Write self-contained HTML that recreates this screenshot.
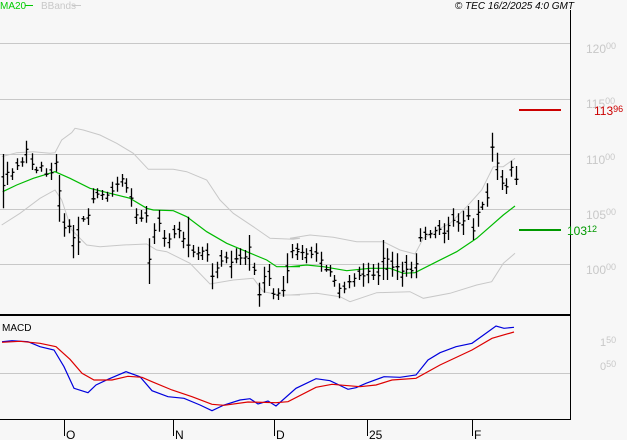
<!DOCTYPE html>
<html><head><meta charset="utf-8"><style>
html,body{margin:0;padding:0;background:#f7f7f7;width:627px;height:440px;overflow:hidden}
svg{display:block;font-family:"Liberation Sans",sans-serif}
</style></head><body>
<svg id="s" width="627" height="440" xmlns="http://www.w3.org/2000/svg">
<rect width="627" height="440" fill="#f7f7f7"/>
<g stroke="#c8c8c8" stroke-width="1">
<line x1="0" y1="43.5" x2="570" y2="43.5"/>
<line x1="0" y1="99.5" x2="570" y2="99.5"/>
<line x1="0" y1="154.5" x2="570" y2="154.5"/>
<line x1="0" y1="209.5" x2="570" y2="209.5"/>
<line x1="0" y1="264.5" x2="570" y2="264.5"/>
<line x1="0" y1="373.5" x2="570" y2="373.5"/>
</g>
<g fill="#c8c8c8" font-size="12">
<text x="586" y="53">120<tspan font-size="9" dy="-4">00</tspan></text>
<text x="586" y="108">115<tspan font-size="9" dy="-4">00</tspan></text>
<text x="586" y="164">110<tspan font-size="9" dy="-4">00</tspan></text>
<text x="586" y="219">105<tspan font-size="9" dy="-4">00</tspan></text>
<text x="586" y="274">100<tspan font-size="9" dy="-4">00</tspan></text>
<text x="600" y="346" font-size="11">1<tspan font-size="9" dy="-3">50</tspan></text>
<text x="600" y="370" font-size="11">0<tspan font-size="9" dy="-3">50</tspan></text>
</g>
<g id="bands" fill="none"></g>
<g id="bars" stroke="#000" stroke-width="1.3"></g>
<line x1="570.5" y1="10" x2="570.5" y2="420" stroke="#000"/>
<line x1="0" y1="315" x2="570" y2="315" stroke="#000" stroke-width="2"/>
<line x1="0" y1="419.5" x2="570" y2="419.5" stroke="#000"/>
<g stroke="#000">
<line x1="64.5" y1="420" x2="64.5" y2="436"/><line x1="173.5" y1="420" x2="173.5" y2="436"/>
<line x1="274.5" y1="420" x2="274.5" y2="436"/><line x1="367.5" y1="420" x2="367.5" y2="436"/>
<line x1="472.5" y1="420" x2="472.5" y2="436"/>
</g>
<g font-size="12" fill="#000">
<text x="66" y="439">O</text><text x="175" y="439">N</text><text x="276" y="439">D</text>
<text x="369" y="439">25</text><text x="474" y="439">F</text>
<text x="2" y="331" font-size="10">MACD</text>
</g>
<line x1="519" y1="110" x2="561" y2="110" stroke="#cc0000" stroke-width="2"/>
<text x="594" y="115" font-size="12" fill="#cc0000">113<tspan font-size="9" dy="-3">96</tspan></text>
<line x1="519" y1="230" x2="561" y2="230" stroke="#009900" stroke-width="2"/>
<text x="567" y="235" font-size="12" fill="#009900">103<tspan font-size="9" dy="-3">12</tspan></text>
<text x="0" y="9" font-size="10" fill="#00cc00">MA20</text>
<line x1="25" y1="5.5" x2="33" y2="5.5" stroke="#00cc00"/>
<text x="41" y="9" font-size="10" fill="#c8c8c8">BBands</text>
<line x1="72" y1="5.5" x2="81" y2="5.5" stroke="#c8c8c8"/>
<text x="574" y="9" font-size="10" font-style="italic" text-anchor="end" fill="#000">© TEC 16/2/2025 4:0 GMT</text>
</svg>
<script>
var NS="http://www.w3.org/2000/svg";
function P(pts,ox,oy,sx,sy){return pts.map(function(p){return (ox+p[0]/sx).toFixed(1)+","+(oy+p[1]/sy).toFixed(1)}).join(" ");}
function pl(g,pts,c,w){var e=document.createElementNS(NS,"polyline");e.setAttribute("points",pts);e.setAttribute("stroke",c);e.setAttribute("stroke-width",w);e.setAttribute("fill","none");document.getElementById(g).appendChild(e);}
var up3=[[5,110],[50,98],[100,95],[150,100],[165,98],[185,60],[215,38],[225,25],[250,30],[300,45],[350,70],[400,100],[445,148],[520,148],[560,155],[620,180],[660,240],[700,280],[760,320],[810,355],[880,358],[900,355]];
var up4=[[0,355],[60,345],[130,352],[200,365],[280,365],[330,390],[375,402],[400,355],[440,330],[480,310],[530,260],[575,210],[610,140],[640,140],[675,115]];
var lo3=[[5,315],[60,280],[120,235],[165,210],[185,240],[215,330],[260,375],[300,380],[370,375],[440,372],[470,390],[500,395],[570,430],[630,492],[700,480],[760,475],[790,515],[840,525],[900,525]];
var lo4=[[0,525],[80,520],[150,530],[180,545],[260,518],[360,515],[400,535],[480,520],[560,495],[605,485],[640,430],[675,400]];
var ma3=[[8,215],[50,195],[100,175],[165,155],[210,175],[270,205],[330,220],[390,235],[440,265],[460,270],[520,272],[560,290],[620,335],[680,370],[740,395],[800,420],[830,440],[900,440]];
var ma4=[[0,440],[50,435],[100,440],[170,452],[240,445],[300,445],[340,460],[375,458],[440,425],[500,395],[560,355],[600,320],[640,285],[675,258]];
pl("bands",P(up3,0,120,3,3)+" "+P(up4,290,120,3,3),"#c8c8c8",1);
pl("bands",P(lo3,0,120,3,3)+" "+P(lo4,290,120,3,3),"#c8c8c8",1);
pl("bands",P(ma3,0,120,3,3)+" "+P(ma4,290,120,3,3),"#00bb00",1.2);
var b3=[[8,102,265],[22,125,195],[37,145,180],[52,115,150],[65,112,140],[78,62,130],[95,100,150],[108,140,160],[122,125,155],[137,145,170],[152,128,180],[167,102,155],[178,165,305],[192,280,350],[207,298,340],[220,315,415],[235,290,405],[250,288,305],[265,265,315],[278,205,250],[292,205,235],[307,210,240],[322,215,245],[335,185,230],[350,170,215],[365,162,200],[378,175,218],[392,205,260],[407,265,312],[422,270,305],[437,258,308],[447,355,492],[462,310,372],[478,270,335],[492,330,380],[507,340,385],[522,315,355],[537,305,355],[550,335,385],[563,290,412],[578,375,412],[593,380,420],[607,380,420],[620,370,425],[635,430,508],[650,425,475],[663,390,440],[678,395,430],[692,392,475],[707,385,430],[720,385,435],[735,390,435],[748,345,452],[763,428,465],[778,488,560],[792,440,518],[807,432,498],[820,505,538],[833,505,540],[848,468,530],[862,400,490],[877,372,415],[890,372,420]];
var b4=[[22,370,410],[35,375,420],[48,385,430],[62,380,415],[77,370,425],[92,395,455],[107,435,455],[120,435,470],[133,465,500],[148,490,535],[162,485,520],[177,465,505],[192,460,500],[207,440,480],[220,430,500],[233,428,490],[248,432,480],[263,428,495],[278,360,480],[292,385,480],[307,395,470],[320,400,480],[335,425,500],[348,405,470],[362,425,475],[377,400,475],[390,325,365],[405,320,360],[420,330,355],[435,320,355],[447,300,345],[462,310,370],[475,290,360],[490,265,320],[505,280,335],[518,272,345],[533,258,300],[548,295,360],[563,240,320],[577,245,270],[590,190,260],[605,38,125],[620,98,180],[635,150,210],[648,175,222],[662,122,170],[677,138,195]];
var d="",i=0;
function add(b,ox){var x=Math.round(ox+b[0]/3)+0.5,h=120+b[1]/3,l=120+b[2]/3,r=h-l;i++;
var o=l+r*(0.3+0.4*((i*37)%10)/10),c=l+r*(0.3+0.4*((i*53)%10)/10);
d+="M"+x+" "+h.toFixed(1)+"V"+l.toFixed(1)+"M"+(x-2)+" "+o.toFixed(1)+"H"+x+"M"+x+" "+c.toFixed(1)+"H"+(x+2);}
b3.forEach(function(b){add(b,0)});b4.forEach(function(b){add(b,290)});
var e=document.createElementNS(NS,"path");e.setAttribute("d",d);document.getElementById("bars").appendChild(e);
var blue=[[5,125],[30,122],[70,125],[100,140],[135,150],[160,200],[185,265],[220,278],[240,255],[270,238],[315,215],[350,230],[380,272],[420,290],[460,295],[500,315],[530,332],[560,315],[600,300],[625,296],[645,312],[670,303],[690,318],[740,265],[790,236],[825,242],[870,268],[890,263],[915,250],[960,230],[1000,232],[1040,225],[1070,180],[1100,158],[1140,140],[1180,130],[1215,100],[1240,78],[1260,85],[1285,82]];
var red=[[5,127],[50,124],[100,130],[140,140],[175,178],[205,220],[235,240],[280,240],[320,229],[355,232],[380,245],[430,270],[480,290],[530,313],[560,316],[620,306],[690,308],[720,305],[790,262],[830,253],[900,260],[940,255],[980,240],[1040,235],[1100,195],[1180,150],[1230,115],[1285,96]];
pl("bands",P(blue,0,300,2.5,3),"#0000dd",1.2);
pl("bands",P(red,0,300,2.5,3),"#dd0000",1.2);
</script>
</body></html>
